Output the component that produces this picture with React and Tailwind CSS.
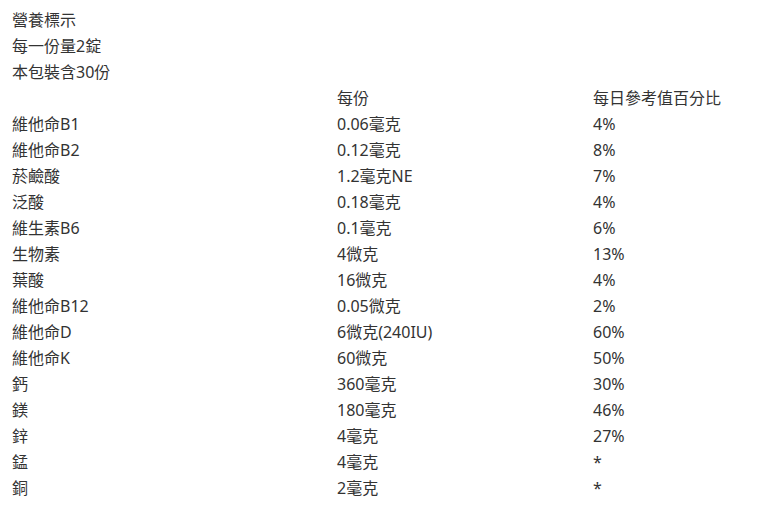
const rows = [
  ["維他命B1", "0.06毫克", "4%"],
  ["維他命B2", "0.12毫克", "8%"],
  ["菸鹼酸", "1.2毫克NE", "7%"],
  ["泛酸", "0.18毫克", "4%"],
  ["維生素B6", "0.1毫克", "6%"],
  ["生物素", "4微克", "13%"],
  ["葉酸", "16微克", "4%"],
  ["維他命B12", "0.05微克", "2%"],
  ["維他命D", "6微克(240IU)", "60%"],
  ["維他命K", "60微克", "50%"],
  ["鈣", "360毫克", "30%"],
  ["鎂", "180毫克", "46%"],
  ["鋅", "4毫克", "27%"],
  ["錳", "4毫克", "*"],
  ["銅", "2毫克", "*"],
];

export default function App() {
  return (
    <div
      className="bg-white min-h-[511px] pt-[7px] pl-3 text-[16px] leading-[26px] text-[#333]"
      style={{ fontFamily: '"Noto Sans", "Noto Sans CJK TC", sans-serif' }}
    >
      <p>營養標示</p>
      <p>每一份量2錠</p>
      <p>本包裝含30份</p>
      <div className="grid grid-cols-[325px_256px_1fr]">
        <div></div>
        <div>每份</div>
        <div>每日參考值百分比</div>
        {rows.map((r, i) => (
          <div key={i} className="contents">
            <div>{r[0]}</div>
            <div>{r[1]}</div>
            <div>{r[2]}</div>
          </div>
        ))}
      </div>
    </div>
  );
}
